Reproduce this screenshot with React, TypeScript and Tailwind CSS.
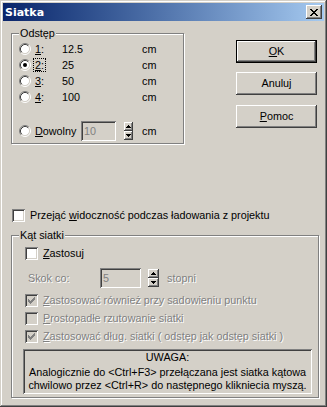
import React from "react";

const raised =
  "bg-[#d4d0c8] [box-shadow:inset_-1px_-1px_#404040,inset_1px_1px_#fff,inset_-2px_-2px_#808080,inset_2px_2px_#d4d0c8]";
const sunken =
  "[box-shadow:inset_1px_1px_#808080,inset_-1px_-1px_#fff,inset_2px_2px_#404040,inset_-2px_-2px_#d4d0c8]";
const dim = "text-[#808080] [text-shadow:1px_1px_0_#fff]";
const groupBox =
  "border border-[#808080] p-0 [box-shadow:1px_1px_0_#fff,inset_1px_1px_0_#fff]";

function Radio({ checked = false }: { checked?: boolean }) {
  return (
    <svg width="12" height="12" viewBox="0 0 12 12" className="shrink-0">
      <circle cx="6" cy="6" r="4.5" fill="#fff" />
      <path d="M2.11 9.89A5.5 5.5 0 0 1 9.89 2.11" fill="none" stroke="#808080" />
      <path d="M9.89 2.11A5.5 5.5 0 0 1 2.11 9.89" fill="none" stroke="#fff" />
      <path d="M2.82 9.18A4.5 4.5 0 0 1 9.18 2.82" fill="none" stroke="#404040" />
      <path d="M9.18 2.82A4.5 4.5 0 0 1 2.82 9.18" fill="none" stroke="#d4d0c8" />
      {checked && <circle cx="6" cy="6" r="2" fill="#000" />}
    </svg>
  );
}

function Check({ checked = false, disabled = false }: { checked?: boolean; disabled?: boolean }) {
  const cols = [2, 3, 4, 3, 2, 1, 0];
  return (
    <span
      className={`w-[13px] h-[13px] shrink-0 ${sunken} ${disabled ? "bg-[#d4d0c8]" : "bg-white"}`}
    >
      {checked && (
        <svg width="13" height="13" viewBox="0 0 13 13" shapeRendering="crispEdges">
          <path
            d={cols.map((y, i) => `M${3 + i} ${3 + y}h1v3h-1z`).join("")}
            fill={disabled ? "#808080" : "#000"}
          />
        </svg>
      )}
    </span>
  );
}

function Arrow({ up }: { up: boolean }) {
  return (
    <svg width="5" height="3" viewBox="0 0 5 3" shapeRendering="crispEdges">
      <path d={up ? "M2 0h1v1h-1zM1 1h3v1h-3zM0 2h5v1h-5z" : "M0 0h5v1h-5zM1 1h3v1h-3zM2 2h1v1h-1z"} />
    </svg>
  );
}

function Spin({ w }: { w: string }) {
  return (
    <div className={`flex flex-col h-[18px] ${w}`}>
      <div className={`h-[9px] flex items-center justify-center ${raised}`}>
        <Arrow up />
      </div>
      <div className={`h-[9px] flex items-center justify-center ${raised}`}>
        <Arrow up={false} />
      </div>
    </div>
  );
}

function Field({ value, w }: { value: string; w: string }) {
  return (
    <div className={`h-[20px] ${w} bg-[#d4d0c8] ${sunken} pl-[3px] flex items-center text-[#808080]`}>
      {value}
    </div>
  );
}

function Button({ children, primary = false }: { children: React.ReactNode; primary?: boolean }) {
  return (
    <div
      className={`w-[81px] h-[23px] flex items-center justify-center ${
        primary ? "border border-black" : ""
      } ${raised}`}
    >
      {children}
    </div>
  );
}

const rows = [
  { key: "1", value: "12.5" },
  { key: "2", value: "25", checked: true },
  { key: "3", value: "50" },
  { key: "4", value: "100" },
];

export default function App() {
  return (
    <div
      className={`w-[327px] h-[407px] bg-[#d4d0c8] p-[3px] text-[10.8px] leading-[13px] text-black font-['Liberation_Sans',Arial,sans-serif] [box-shadow:inset_-1px_-1px_#404040,inset_1px_1px_#d4d0c8,inset_-2px_-2px_#808080,inset_2px_2px_#fff]`}
    >
      <div className="h-[18px] flex items-center bg-linear-to-r from-[#0a246a] to-[#a6caf0] pl-[2px] pr-[2px]">
        <span className="text-white font-bold text-[11px] font-['DejaVu_Sans',Verdana,sans-serif]">
          Siatka
        </span>
        <div className={`ml-auto w-[16px] h-[14px] flex items-center justify-center ${raised}`}>
          <svg width="8" height="7" viewBox="0 0 8 7" shapeRendering="crispEdges">
            <path d="M0 0h2v1h-2zM6 0h2v1h-2zM1 1h2v1h-2zM5 1h2v1h-2zM2 2h4v1h-4zM3 3h2v1h-2zM2 4h4v1h-4zM1 5h2v1h-2zM5 5h2v1h-2zM0 6h2v1h-2zM6 6h2v1h-2z" />
          </svg>
        </div>
      </div>

      <div className="flex flex-col">
        <div className="flex mt-[6px]">
          <fieldset className={`ml-[8px] w-[173px] ${groupBox}`}>
            <legend className="ml-[7px] px-[1px] bg-[#d4d0c8]">Odstęp</legend>
            <div className="pt-[1px] pl-[7px] pb-[2px] flex flex-col">
              {rows.map((r) => (
                <div key={r.key} className="h-[16px] flex items-center">
                  <Radio checked={r.checked} />
                  <span className="w-[28px] ml-[3px]">
                    <span
                      className={`px-[1px] ${
                        r.checked ? "outline-1 outline-dotted outline-black" : ""
                      }`}
                    >
                      <span className="underline underline-offset-[1px]">{r.key}</span>:
                    </span>
                  </span>
                  <span className="w-[80px]">{r.value}</span>
                  <span>cm</span>
                </div>
              ))}
              <div className="h-[20px] mt-[16px] flex items-center">
                <Radio />
                <span className="w-[47px] ml-[3px] pl-[1px]">
                  <span className="underline underline-offset-[1px]">D</span>owolny
                </span>
                <Field value="10" w="w-[35px]" />
                <div className="ml-[8px]">
                  <Spin w="w-[9px]" />
                </div>
                <span className="ml-[9px]">cm</span>
              </div>
            </div>
          </fieldset>

          <div className="ml-[52px] mt-[13px] flex flex-col">
            <Button primary>
              <span className="underline underline-offset-[1px]">O</span>K
            </Button>
            <div className="mt-[9px]">
              <Button>Anuluj</Button>
            </div>
            <div className="mt-[10px]">
              <Button>
                <span>
                  <span className="underline underline-offset-[1px]">P</span>omoc
                </span>
              </Button>
            </div>
          </div>
        </div>

        <div className="mt-[65px] ml-[9px] h-[13px] flex items-center">
          <Check />
          <span className="ml-[5px]">
            Przejąć <span className="underline underline-offset-[1px]">w</span>idoczność podczas
            ładowania z projektu
          </span>
        </div>

        <fieldset className={`mt-[7px] ml-[8px] w-[308px] ${groupBox}`}>
          <legend className="ml-[7px] px-[1px] bg-[#d4d0c8]">Kąt siatki</legend>
          <div className="pt-[5px] pl-[11px] pb-[3px] flex flex-col">
            <div className="ml-[2px] h-[13px] flex items-center">
              <Check />
              <span className="ml-[5px]">
                <span className="underline underline-offset-[1px]">Z</span>astosuj
              </span>
            </div>

            <div className="ml-[5px] mt-[8px] h-[20px] flex items-center">
              <span className={`w-[72px] ${dim}`}>Skok co:</span>
              <Field value="5" w="w-[41px]" />
              <div className="ml-[7px]">
                <Spin w="w-[11px]" />
              </div>
              <span className={`ml-[8px] ${dim}`}>stopni</span>
            </div>

            <div className="ml-[2px] mt-[6px] h-[13px] flex items-center">
              <Check checked disabled />
              <span className={`ml-[5px] ${dim}`}>
                <span className="underline underline-offset-[1px]">Z</span>astosować również przy
                sadowieniu punktu
              </span>
            </div>
            <div className="ml-[2px] mt-[5px] h-[13px] flex items-center">
              <Check disabled />
              <span className={`ml-[5px] ${dim}`}>
                <span className="underline underline-offset-[1px]">P</span>rostopadłe rzutowanie
                siatki
              </span>
            </div>
            <div className="ml-[2px] mt-[5px] h-[13px] flex items-center">
              <Check checked disabled />
              <span className={`ml-[5px] ${dim}`}>
                <span className="underline underline-offset-[1px]">Z</span>astosować dług. siatki
                ( odstęp jak odstęp siatki )
              </span>
            </div>

            <div
              className={`mt-[6px] w-[289px] h-[45px] p-[2px] flex flex-col items-center text-center ${sunken}`}
            >
              <div className="mb-[2px]">UWAGA:</div>
              <div>Analogicznie do &lt;Ctrl+F3&gt; przełączana jest siatka kątowa</div>
              <div>chwilowo przez &lt;Ctrl+R&gt; do następnego klikniecia myszą.</div>
            </div>
          </div>
        </fieldset>
      </div>
    </div>
  );
}
